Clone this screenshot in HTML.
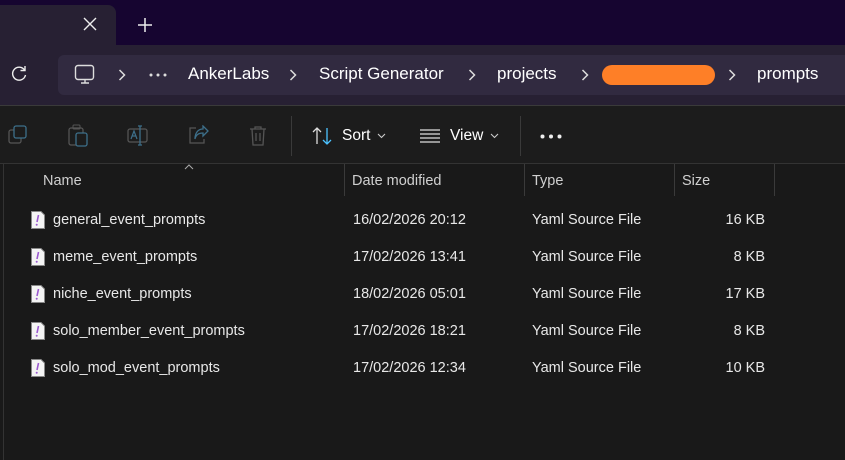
<!DOCTYPE html>
<html><head><meta charset="utf-8"><style>
*{margin:0;padding:0;box-sizing:border-box}
body{width:845px;height:460px;overflow:hidden;background:#191919;font-family:"Segoe UI","Liberation Sans",sans-serif;color:#fff;position:relative}
.abs{position:absolute}
.t{position:absolute;font-size:17px;color:#fff;white-space:nowrap}
.c{position:absolute;font-size:14.5px;color:#e8e8e8;white-space:nowrap}
.h{position:absolute;font-size:14.5px;color:#d0d0d0}
</style></head><body>
<div class="abs" style="left:0;top:0;width:845px;height:46px;background:#160530"></div>
<div class="abs" style="left:0;top:5px;width:116px;height:41px;background:#272033;border-radius:0 8px 0 0"></div>
<div class="abs" style="left:0;top:45px;width:845px;height:60px;background:#272033"></div>
<svg class="abs" style="left:83px;top:17px" width="14" height="14"><path d="M1 1L13 13M13 1L1 13" stroke="#eee" stroke-width="1.4"/></svg>
<svg class="abs" style="left:138px;top:18px" width="14" height="14"><path d="M7 0V14M0 7H14" stroke="#eee" stroke-width="1.5"/></svg>
<svg class="abs" style="left:10px;top:65px" width="18" height="18"><path d="M14.5 5A6.5 6.5 0 1 0 15.5 10" stroke="#eee" stroke-width="1.4" fill="none"/><path d="M15 1V5.5H10.5" stroke="#eee" stroke-width="1.4" fill="none"/></svg>
<div class="abs" style="left:58px;top:55px;width:800px;height:40px;background:#312a40;border-radius:6px"></div>
<svg class="abs" style="left:74px;top:64px" width="22" height="22"><rect x="1.5" y="1.5" width="18" height="14" rx="2.5" stroke="#ddd" stroke-width="1.4" fill="none"/><path d="M7 19H15M11 16V19" stroke="#ddd" stroke-width="1.4"/></svg>
<svg class="abs" style="left:118px;top:69px" width="8" height="12"><path d="M1.5 1L6.5 6L1.5 11" stroke="#ddd" stroke-width="1.5" fill="none"/></svg>
<svg class="abs" style="left:149px;top:73px" width="18" height="4"><circle cx="2" cy="2" r="1.5" fill="#ddd"/><circle cx="9" cy="2" r="1.5" fill="#ddd"/><circle cx="16" cy="2" r="1.5" fill="#ddd"/></svg>
<div class="t" style="left:188px;top:64px">AnkerLabs</div>
<svg class="abs" style="left:289px;top:69px" width="8" height="12"><path d="M1.5 1L6.5 6L1.5 11" stroke="#ddd" stroke-width="1.5" fill="none"/></svg>
<div class="t" style="left:319px;top:64px">Script Generator</div>
<svg class="abs" style="left:468px;top:69px" width="8" height="12"><path d="M1.5 1L6.5 6L1.5 11" stroke="#ddd" stroke-width="1.5" fill="none"/></svg>
<div class="t" style="left:497px;top:64px">projects</div>
<svg class="abs" style="left:581px;top:69px" width="8" height="12"><path d="M1.5 1L6.5 6L1.5 11" stroke="#ddd" stroke-width="1.5" fill="none"/></svg>
<div class="abs" style="left:602px;top:65px;width:113px;height:20px;background:#fe7f27;border-radius:10px"></div>
<svg class="abs" style="left:728px;top:69px" width="8" height="12"><path d="M1.5 1L6.5 6L1.5 11" stroke="#ddd" stroke-width="1.5" fill="none"/></svg>
<div class="t" style="left:757px;top:64px">prompts</div>
<div class="abs" style="left:0;top:105px;width:845px;height:1px;background:#3a3a3a"></div>
<div class="abs" style="left:0;top:106px;width:845px;height:57px;background:#1c1c1c"></div>
<svg class="abs" style="left:8px;top:125px" width="20" height="20"><rect x="1" y="5" width="12" height="13" rx="2" stroke="#555" fill="none" stroke-width="1.3"/><rect x="6" y="1" width="12" height="12" rx="2" stroke="#3d6f8a" fill="#1c1c1c" stroke-width="1.3"/></svg>
<svg class="abs" style="left:68px;top:124px" width="22" height="24"><rect x="1" y="4" width="14" height="17" rx="2" stroke="#555" fill="none" stroke-width="1.3"/><rect x="5" y="1" width="7" height="4" rx="1" stroke="#555" fill="none"/><rect x="8" y="9" width="11" height="13" rx="2" stroke="#3d6f8a" fill="#1c1c1c" stroke-width="1.3"/></svg>
<svg class="abs" style="left:127px;top:125px" width="22" height="22"><rect x="1" y="4" width="19" height="13" rx="2" stroke="#555" fill="none" stroke-width="1.3"/><path d="M4 14L7 6L10 14M5 11H9" stroke="#3d6f8a" fill="none" stroke-width="1.2"/><path d="M13 1V20M11 1H15M11 20H15" stroke="#3d6f8a" stroke-width="1.3"/></svg>
<svg class="abs" style="left:187px;top:125px" width="22" height="22"><path d="M9 3H3V18H17V14" stroke="#555" fill="none" stroke-width="1.3"/><path d="M8 14C9 9 13 8 16 8V11L21 6L16 1V4C11 4 8 8 8 14Z" stroke="#3d6f8a" fill="none" stroke-width="1.3"/></svg>
<svg class="abs" style="left:248px;top:125px" width="20" height="22"><path d="M2 4H18M7 4V2H13V4M4 4L5 20H15L16 4M8 8V16M12 8V16" stroke="#555" fill="none" stroke-width="1.3"/></svg>
<div class="abs" style="left:291px;top:116px;width:1px;height:40px;background:#3a3a3a"></div>
<svg class="abs" style="left:312px;top:127px" width="22" height="18"><path d="M5 17V1M1 5L5 1L9 5" stroke="#ddd" fill="none" stroke-width="1.3"/><path d="M15 1V17M11 13L15 17L19 13" stroke="#4cc2ff" fill="none" stroke-width="1.3"/></svg>
<div class="c" style="left:342px;top:127px;font-size:15.5px;color:#fff">Sort</div>
<svg class="abs" style="left:377px;top:133px" width="9" height="6"><path d="M1 1L4.5 4.5L8 1" stroke="#ccc" stroke-width="1.1" fill="none"/></svg>
<svg class="abs" style="left:420px;top:129px" width="20" height="14"><path d="M0 1H20M0 5H20M0 9H20M0 13H20" stroke="#ddd" stroke-width="1.2"/></svg>
<div class="c" style="left:450px;top:127px;font-size:15.5px;color:#fff">View</div>
<svg class="abs" style="left:490px;top:133px" width="9" height="6"><path d="M1 1L4.5 4.5L8 1" stroke="#ccc" stroke-width="1.1" fill="none"/></svg>
<div class="abs" style="left:520px;top:116px;width:1px;height:40px;background:#3a3a3a"></div>
<svg class="abs" style="left:540px;top:134px" width="22" height="5"><circle cx="2.5" cy="2.5" r="2" fill="#eee"/><circle cx="11" cy="2.5" r="2" fill="#eee"/><circle cx="19.5" cy="2.5" r="2" fill="#eee"/></svg>
<div class="abs" style="left:0;top:163px;width:845px;height:1px;background:#333"></div>
<div class="abs" style="left:3px;top:164px;width:1px;height:296px;background:#333"></div>
<svg class="abs" style="left:184px;top:164px" width="10" height="6"><path d="M1 5L5 1L9 5" stroke="#aaa" stroke-width="1" fill="none"/></svg>
<div class="h" style="left:43px;top:173px">Name</div>
<div class="h" style="left:352px;top:173px">Date modified</div>
<div class="h" style="left:532px;top:173px">Type</div>
<div class="h" style="left:682px;top:173px">Size</div>
<div class="abs" style="left:344px;top:164px;width:1px;height:32px;background:#3a3a3a"></div>
<div class="abs" style="left:524px;top:164px;width:1px;height:32px;background:#3a3a3a"></div>
<div class="abs" style="left:674px;top:164px;width:1px;height:32px;background:#3a3a3a"></div>
<div class="abs" style="left:774px;top:164px;width:1px;height:32px;background:#3a3a3a"></div>
<div id="rows"></div>
<script>
var d=[["general_event_prompts","16/02/2026 20:12","16 KB"],["meme_event_prompts","17/02/2026 13:41","8 KB"],["niche_event_prompts","18/02/2026 05:01","17 KB"],["solo_member_event_prompts","17/02/2026 18:21","8 KB"],["solo_mod_event_prompts","17/02/2026 12:34","10 KB"]];
var h="";d.forEach(function(r,i){var y=211+i*37;
h+='<svg class="abs" style="left:31px;top:'+y+'px" width="14" height="18"><path d="M0.5 0.5H10L13.5 4V17.5H0.5Z" fill="#f4f4f4" stroke="#888"/><path d="M7.5 4L6 11" stroke="#9b59d0" stroke-width="1.6"/><circle cx="5.7" cy="13.8" r="1" fill="#9b59d0"/></svg>';
var ty=y+1;
h+='<div class="c" style="left:53px;top:'+ty+'px">'+r[0]+'</div><div class="c" style="left:353px;top:'+ty+'px">'+r[1]+'</div><div class="c" style="left:532px;top:'+ty+'px">Yaml Source File</div><div class="c" style="left:675px;width:90px;text-align:right;top:'+ty+'px">'+r[2]+'</div>';});
document.getElementById("rows").innerHTML=h;
</script>
</body></html>
